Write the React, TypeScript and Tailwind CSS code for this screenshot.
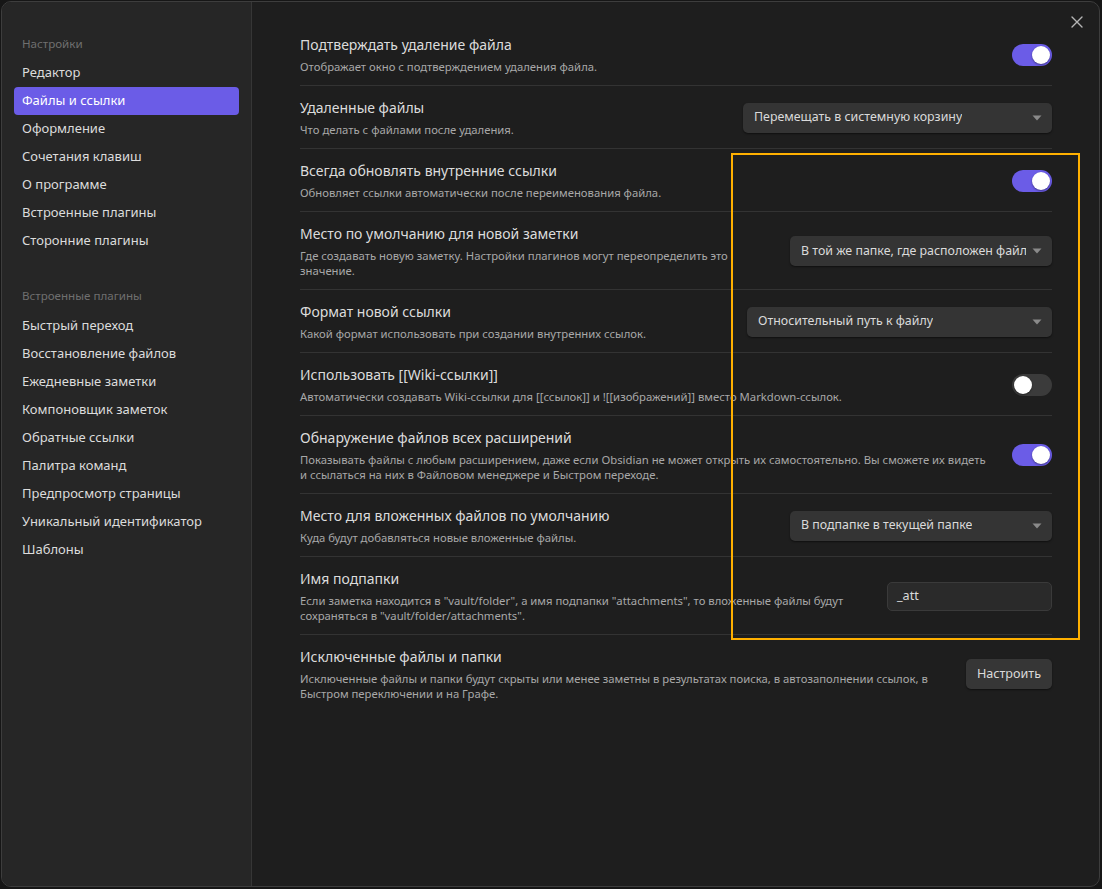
import React from "react";

const font = { fontFamily: '"Noto Sans", "Open Sans", sans-serif' };

function Toggle({ on }: { on: boolean }) {
  return (
    <div
      className={`w-[40px] h-[22px] rounded-full flex items-center px-[2px] ${
        on ? "bg-[#6b5ce7] justify-end" : "bg-[#3b3b3b] justify-start"
      }`}
    >
      <div className="w-[18px] h-[18px] rounded-full bg-white shadow-[0_1px_2px_rgba(0,0,0,0.4)]" />
    </div>
  );
}

function Dropdown({ text, w }: { text: string; w: string }) {
  return (
    <div
      className={`${w} h-[30px] rounded-[5px] bg-[#343434] shadow-[0_1px_2px_rgba(0,0,0,0.5)] flex items-center justify-between pl-[11px] pr-[10px] text-[12.4px] text-[#dadada] whitespace-nowrap`}
    >
      <span className="overflow-hidden">{text}</span>
      <svg width="10" height="6" viewBox="0 0 10 6" className="shrink-0 ml-[6px]">
        <path d="M0.5 0.5 L9.5 0.5 L5 5.5 Z" fill="#8a8a8a" />
      </svg>
    </div>
  );
}

type Row = {
  title: string;
  desc: React.ReactNode;
  control: React.ReactNode;
};

const rows: Row[] = [
  {
    title: "Подтверждать удаление файла",
    desc: "Отображает окно с подтверждением удаления файла.",
    control: <Toggle on />,
  },
  {
    title: "Удаленные файлы",
    desc: "Что делать с файлами после удаления.",
    control: <Dropdown text="Перемещать в системную корзину" w="w-[309px]" />,
  },
  {
    title: "Всегда обновлять внутренние ссылки",
    desc: "Обновляет ссылки автоматически после переименования файла.",
    control: <Toggle on />,
  },
  {
    title: "Место по умолчанию для новой заметки",
    desc: (
      <>
        Где создавать новую заметку. Настройки плагинов могут переопределить это
        <br />
        значение.
      </>
    ),
    control: <Dropdown text="В той же папке, где расположен файл" w="w-[262px]" />,
  },
  {
    title: "Формат новой ссылки",
    desc: "Какой формат использовать при создании внутренних ссылок.",
    control: <Dropdown text="Относительный путь к файлу" w="w-[305px]" />,
  },
  {
    title: "Использовать [[Wiki-ссылки]]",
    desc: "Автоматически создавать Wiki-ссылки для [[ссылок]] и ![[изображений]] вместо Markdown-ссылок.",
    control: <Toggle on={false} />,
  },
  {
    title: "Обнаружение файлов всех расширений",
    desc: (
      <>
        Показывать файлы с любым расширением, даже если Obsidian не может открыть их самостоятельно. Вы сможете их видеть
        <br />
        и ссылаться на них в Файловом менеджере и Быстром переходе.
      </>
    ),
    control: <Toggle on />,
  },
  {
    title: "Место для вложенных файлов по умолчанию",
    desc: "Куда будут добавляться новые вложенные файлы.",
    control: <Dropdown text="В подпапке в текущей папке" w="w-[262px]" />,
  },
  {
    title: "Имя подпапки",
    desc: (
      <>
        Если заметка находится в "vault/folder", а имя подпапки "attachments", то вложенные файлы будут
        <br />
        сохраняться в "vault/folder/attachments".
      </>
    ),
    control: (
      <div className="w-[165px] h-[29px] rounded-[5px] bg-[#2a2a2a] border border-[#3a3a3a] flex items-center px-[9px] text-[12.6px] text-[#dadada]">
        _att
      </div>
    ),
  },
  {
    title: "Исключенные файлы и папки",
    desc: (
      <>
        Исключенные файлы и папки будут скрыты или менее заметны в результатах поиска, в автозаполнении ссылок, в
        <br />
        Быстром переключении и на Графе.
      </>
    ),
    control: (
      <div className="w-[86px] h-[30px] rounded-[5px] bg-[#363636] shadow-[0_1px_2px_rgba(0,0,0,0.5)] flex items-center justify-center text-[12.6px] text-[#dadada]">
        Настроить
      </div>
    ),
  },
];

const group1 = [
  "Редактор",
  "Файлы и ссылки",
  "Оформление",
  "Сочетания клавиш",
  "О программе",
  "Встроенные плагины",
  "Сторонние плагины",
];
const group2 = [
  "Быстрый переход",
  "Восстановление файлов",
  "Ежедневные заметки",
  "Компоновщик заметок",
  "Обратные ссылки",
  "Палитра команд",
  "Предпросмотр страницы",
  "Уникальный идентификатор",
  "Шаблоны",
];

export default function App() {
  return (
    <div className="relative w-[1102px] h-[889px] bg-[#161616] p-[1px] overflow-hidden" style={font}>
      <div className="w-[1099px] h-[886px] rounded-[10px] border border-[#3d3d3d] overflow-hidden flex bg-[#1e1e1e]">
        {/* Sidebar */}
        <div className="w-[250px] shrink-0 bg-[#262626] border-r border-[#363636] pt-[31px] px-[12px]">
          <div className="h-[22px] flex items-center px-[8px] text-[11.6px] text-[#6f6f6f]">Настройки</div>
          <div className="mt-[4px] flex flex-col">
            {group1.map((t) => (
              <div
                key={t}
                className={`h-[28px] flex items-center px-[8px] rounded-[4px] text-[13px] ${
                  t === "Файлы и ссылки" ? "bg-[#6b5ce7] text-white" : "text-[#dcdcdc]"
                }`}
              >
                {t}
              </div>
            ))}
          </div>
          <div className="mt-[30px] h-[22px] flex items-center px-[8px] text-[11.6px] text-[#6f6f6f]">
            Встроенные плагины
          </div>
          <div className="mt-[5px] flex flex-col">
            {group2.map((t) => (
              <div key={t} className="h-[28px] flex items-center px-[8px] rounded-[4px] text-[13px] text-[#dcdcdc]">
                {t}
              </div>
            ))}
          </div>
        </div>
        {/* Main */}
        <div className="relative flex-1 pl-[48px] pr-[47px] pt-[21px]">
          <div className="absolute right-[13px] top-[11px] w-[18px] h-[18px] flex items-center justify-center">
            <svg width="12" height="12" viewBox="0 0 12 12">
              <path d="M1 1 L11 11 M11 1 L1 11" stroke="#b5b5b5" strokeWidth="1.4" strokeLinecap="round" />
            </svg>
          </div>
          {rows.map((r, i) => (
            <div
              key={r.title}
              className={`flex items-center justify-between pt-[12px] pb-[11px] ${i > 0 ? "border-t border-[#333333]" : ""}`}
            >
              <div className="flex-1 min-w-0 pr-[20px]">
                <div className="text-[14px] leading-[20px] text-[#dcdcdc]">{r.title}</div>
                <div className="mt-[4px] text-[11.3px] leading-[15px] text-[#a8a8a8] whitespace-nowrap">{r.desc}</div>
              </div>
              <div className="shrink-0">{r.control}</div>
            </div>
          ))}
        </div>
      </div>
      {/* annotation */}
      <div className="absolute left-[731px] top-[153px] w-[349px] h-[487px] border-2 border-[#ffb000] pointer-events-none" />
    </div>
  );
}
